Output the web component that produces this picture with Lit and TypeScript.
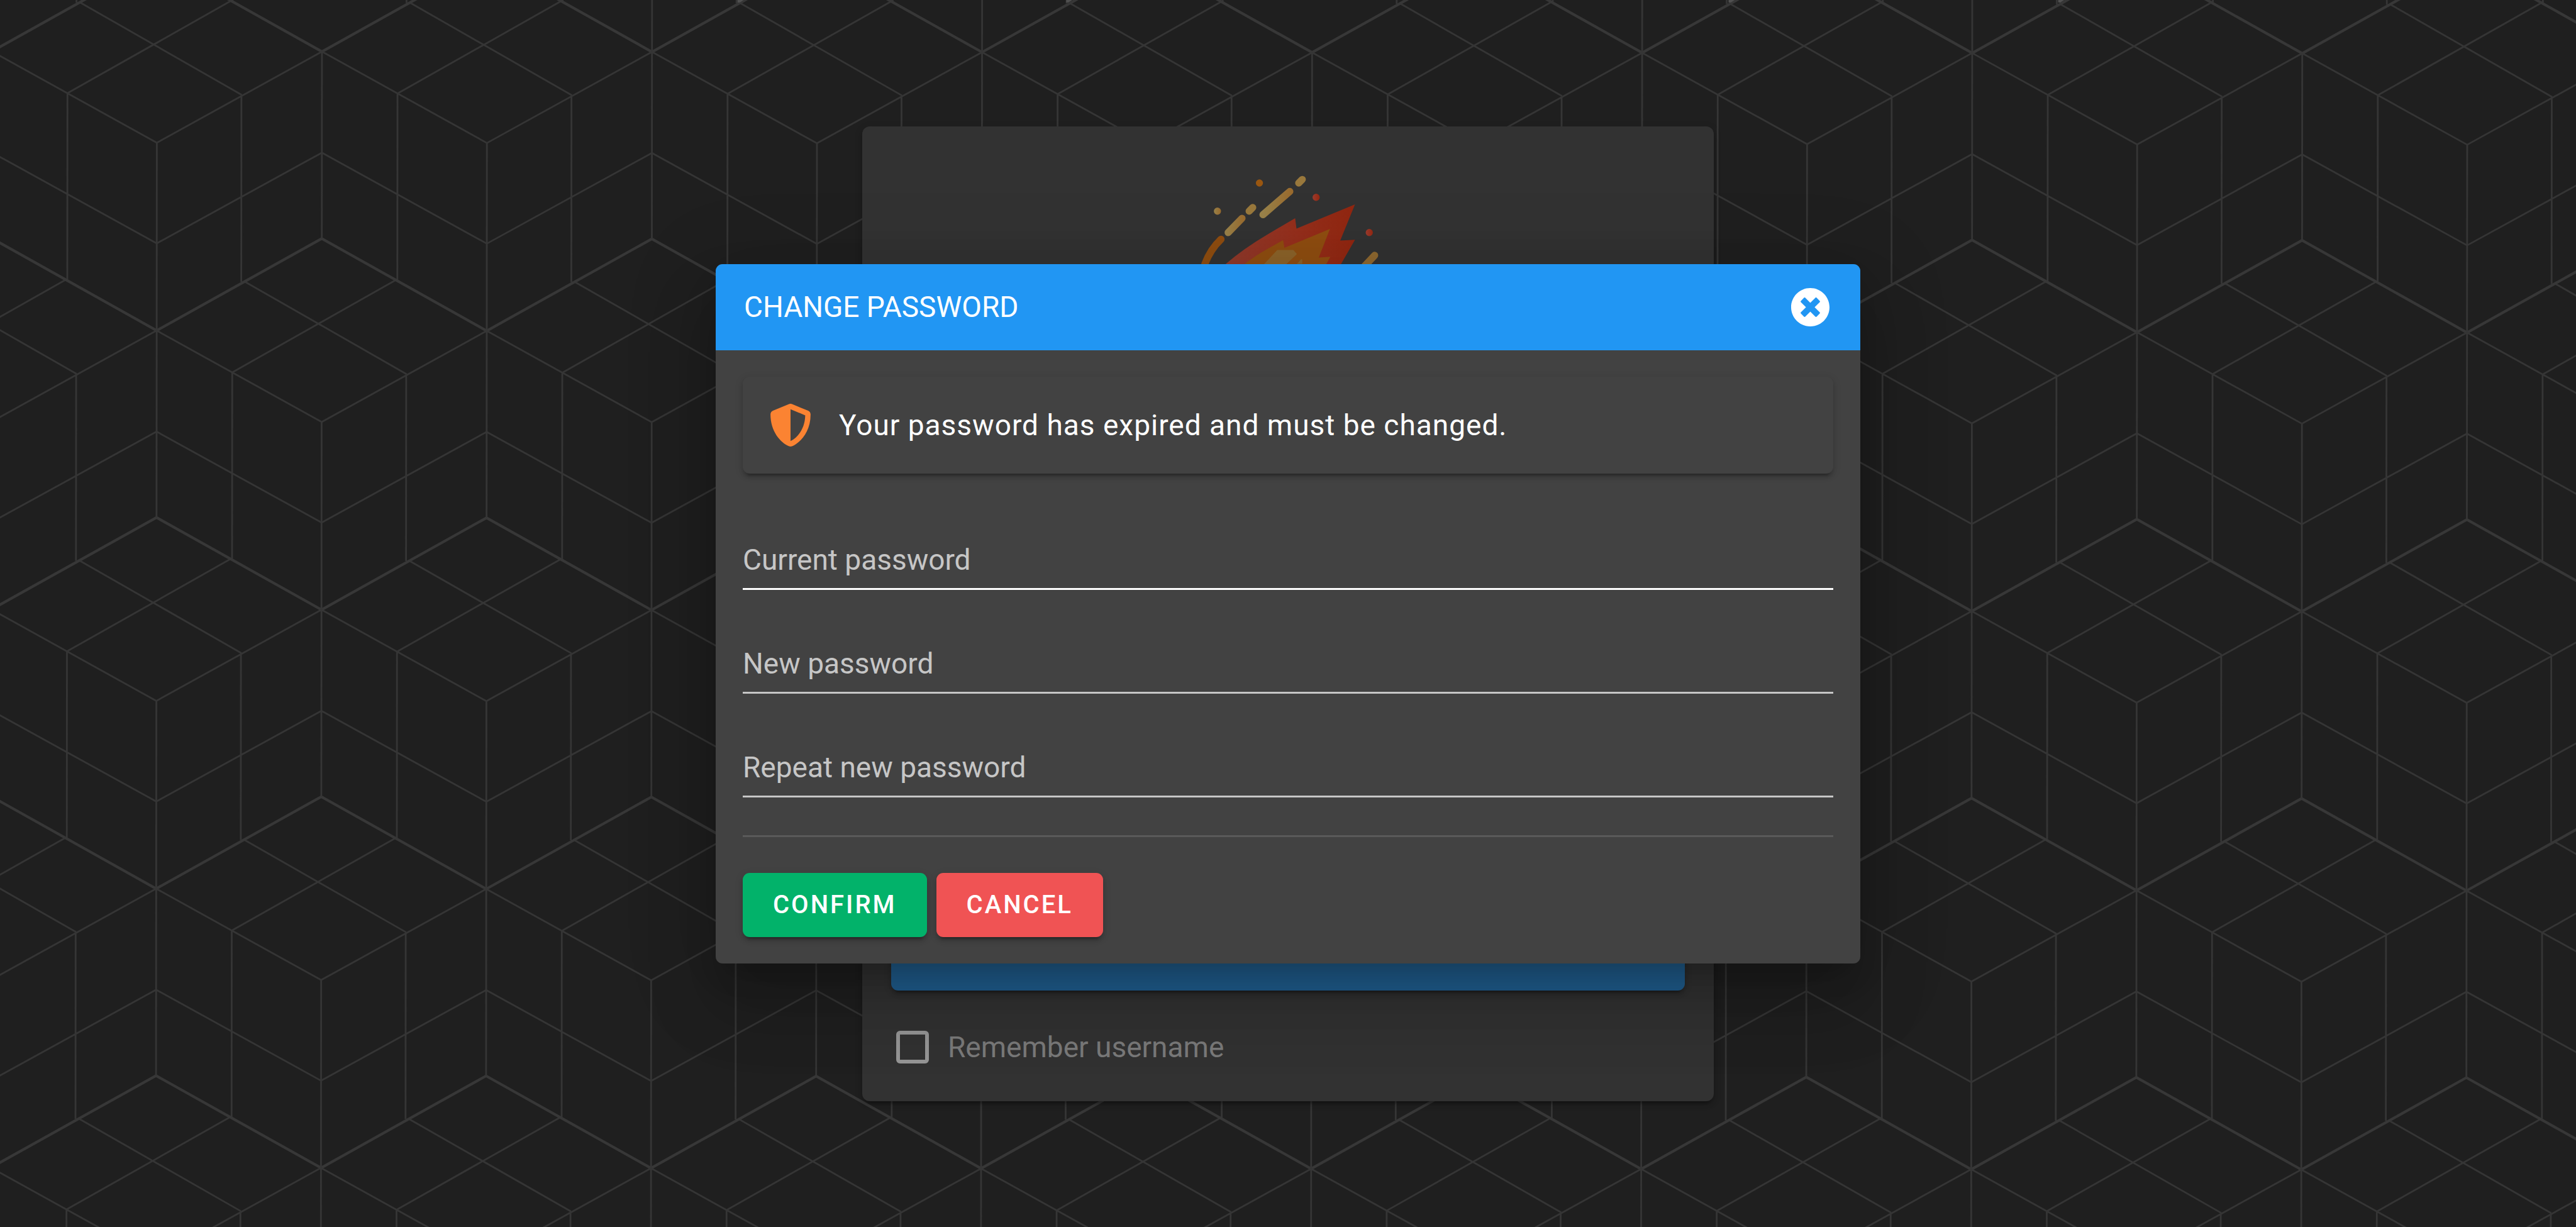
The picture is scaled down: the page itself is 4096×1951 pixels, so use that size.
import { LitElement, html, css, svg } from "lit";
import { customElement, property } from "lit/decorators.js";

/* Isometric cube wallpaper: every star-shaped joint repeats the same strokes. */
const THIN =
  "M0 0L-369 204M0 0L369 204M0 0V418M0 226L-369 429M0 226L369 429" +
  "M-180 99V515M169 95V511M-173 514L190 721M165 511L-199 717";
const BOLD = "M0 418L-369 624M0 418L369 624";
const JOINTS: { x: number; y: number; open: boolean }[] = [];
for (let row = -1; row < 5; row++) {
  for (let col = -1; col < 9; col++) {
    const odd = Math.abs(row % 2) === 1;
    JOINTS.push({
      x: 720 + col * 738 - (odd ? 369 : 0),
      y: 115 + row * 624,
      open: row === 0 && [0, 3, 6, 7].includes(col),
    });
  }
}
const SPARKS = [1655, 2390, 3871, 4608];

@customElement("cube-backdrop")
export class CubeBackdrop extends LitElement {
  static styles = css`
    :host {
      display: block;
    }
    .art {
      display: block;
      width: 100%;
      height: 100%;
    }
    .thin,
    .bold {
      fill: none;
      stroke: #353535;
      stroke-width: 4;
    }
    .bold {
      stroke: #373737;
      stroke-width: 6;
    }
    .spark {
      fill: #505050;
    }
  `;
  render() {
    return html`<svg class="art" viewBox="0 0 5760 2744" preserveAspectRatio="xMidYMid slice" aria-hidden="true">
      <g transform="rotate(0.05)">
        ${JOINTS.map(
          (j) => svg`<g transform="translate(${j.x} ${j.y})">
            <path class="thin" d=${THIN} />
            <path class="bold" d=${BOLD} />
            ${j.open ? null : svg`<path class="thin" d="M0 0V-420" />`}
          </g>`,
        )}
      </g>
      ${SPARKS.map((x) => svg`<path class="spark" d="M${x - 6} 0h14l-9 6h-5z" />`)}
    </svg>`;
  }
}

@customElement("comet-logo")
export class CometLogo extends LitElement {
  static styles = css`
    :host {
      display: block;
    }
    .art {
      display: block;
      width: 398px;
      height: 284px;
    }
    .streak {
      fill: none;
      stroke-width: 16;
      stroke-linecap: round;
    }
  `;
  render() {
    return html`<svg class="art" viewBox="0 0 560 400" aria-hidden="true">
      <defs>
        <linearGradient id="red" gradientUnits="userSpaceOnUse" x1="150" y1="0" x2="430" y2="0">
          <stop offset="0" stop-color="#90392b" />
          <stop offset="0.5" stop-color="#952f1c" />
          <stop offset="1" stop-color="#912610" />
        </linearGradient>
        <linearGradient id="amber" gradientUnits="userSpaceOnUse" x1="224" y1="0" x2="290" y2="0">
          <stop offset="0" stop-color="#99824a" />
          <stop offset="1" stop-color="#996a2d" />
        </linearGradient>
        <linearGradient id="amber2" gradientUnits="userSpaceOnUse" x1="140" y1="0" x2="185" y2="0">
          <stop offset="0" stop-color="#99824a" />
          <stop offset="1" stop-color="#996a2d" />
        </linearGradient>
        <linearGradient id="dot"><stop offset="0" stop-color="#99824a" /><stop offset="1" stop-color="#996a2d" /></linearGradient>
        <linearGradient id="ember"><stop offset="0" stop-color="#9b3c2e" /><stop offset="1" stop-color="#952711" /></linearGradient>
      </defs>
      <circle cx="122" cy="132" r="8" fill="url(#dot)" />
      <circle cx="216" cy="69" r="8" fill="#995610" />
      <circle cx="343" cy="101" r="8" fill="url(#ember)" />
      <circle cx="462" cy="180" r="8" fill="url(#ember)" />
      <path class="streak" stroke="url(#amber)" d="M224 140L284 88" />
      <path class="streak" stroke="#99783c" d="M304 69L312 61" />
      <path class="streak" stroke="#99783c" d="M193 132L201 124" />
      <path class="streak" stroke="url(#amber2)" d="M146 180L177 148" />
      <path class="streak" stroke="#8f4d10" d="M130 195Q106 218 94 250Q82 285 82 320" />
      <path class="streak" stroke="#8e6830" d="M474 231L430 278" />
      <path fill="url(#red)" d="M141 250Q180 216 236 183L296 148L299 171L430 117L397 198L430 196L399 250L360 320Q240 400 130 320Q110 280 141 250Z" />
      <path fill="#8f4d10" d="M183 250Q205 234 221 224L269 197L272 214L374 172L349 236L375 234L366 250L330 310H160Q150 275 183 250Z" />
      <path fill="#8c6329" d="M256 219H292L300 228L277 250L250 280H210L227 250ZM300 250L309 240Q312 238 312 242V250Z" />
    </svg>`;
  }
}

@customElement("password-field")
export class PasswordField extends LitElement {
  @property() label = "";
  @property({ type: Boolean }) active = false;

  static styles = css`
    :host {
      display: block;
    }
    .field {
      display: grid;
      height: 162px;
      border-bottom: 3px solid #c6c6c6;
    }
    .field.active {
      border-bottom-color: #ffffff;
    }
    .label,
    .input {
      grid-area: 1 / 1;
      align-self: end;
      font: 400 46px/54px Roboto, sans-serif;
      padding: 0 0 18px;
    }
    .label {
      color: #c6c6c6;
    }
    .input {
      width: 100%;
      box-sizing: border-box;
      border: 0;
      outline: 0;
      margin: 0;
      background: transparent;
      color: #ffffff;
    }
  `;
  render() {
    return html`<div class="field ${this.active ? "active" : ""}">
      <label class="label" for="entry">${this.label}</label>
      <input class="input" id="entry" type="password" />
    </div>`;
  }
}

@customElement("app-root")
export class AppRoot extends LitElement {
  static styles = css`
    :host {
      display: block;
      font: 400 46px/54px Roboto, sans-serif;
      color: #ffffff;
    }
    .page {
      display: grid;
      place-items: center;
      min-height: 100vh;
      overflow: hidden;
      background: #1f1f1f;
    }
    .backdrop,
    .login,
    .dialog {
      grid-area: 1 / 1;
    }
    .backdrop {
      width: 100%;
      height: 100vh;
    }
    .login {
      display: flex;
      flex-direction: column;
      justify-content: space-between;
      box-sizing: border-box;
      width: 100%;
      max-width: 1354px;
      min-height: 1550px;
      padding: 41px 46px 45px;
      border-radius: 12px;
      background: #323232;
      box-shadow: 0 9px 3px -6px rgba(0, 0, 0, 0.2), 0 6px 6px rgba(0, 0, 0, 0.14), 0 3px 14px rgba(0, 0, 0, 0.12);
    }
    .logo {
      align-self: center;
    }
    .submit {
      display: block;
      width: 100%;
      height: 125px;
      border: 0;
      border-radius: 11px;
      background: #216092;
      box-shadow: 0 9px 3px -6px rgba(0, 0, 0, 0.2), 0 6px 6px rgba(0, 0, 0, 0.14), 0 3px 14px rgba(0, 0, 0, 0.12);
    }
    .remember {
      display: flex;
      align-items: center;
      gap: 30px;
      padding: 63px 0 14px 8px;
      color: #7a7a7a;
    }
    .tick {
      appearance: none;
      box-sizing: border-box;
      width: 52px;
      height: 52px;
      margin: 0;
      border: 6px solid #969696;
      border-radius: 6px;
    }
    .dialog {
      width: 100%;
      max-width: 1820px;
      border-radius: 11px;
      background: #424242;
      overflow: hidden;
      box-shadow: 0 31px 43px -20px rgba(0, 0, 0, 0.2), 0 68px 108px 9px rgba(0, 0, 0, 0.14),
        0 26px 131px 23px rgba(0, 0, 0, 0.12);
    }
    .bar {
      display: flex;
      align-items: center;
      justify-content: space-between;
      height: 137px;
      padding: 0 48px 0 45px;
      background: #2196f3;
    }
    .title {
      margin: 0;
      font: inherit;
    }
    .close {
      display: block;
      padding: 0;
      border: 0;
      background: none;
    }
    .cross {
      display: block;
      width: 63px;
      height: 63px;
      fill: #ffffff;
    }
    .body {
      padding: 42px 43px;
    }
    .notice {
      display: flex;
      align-items: center;
      gap: 43px;
      height: 154px;
      margin-bottom: 20px;
      padding: 0 42px;
      box-sizing: border-box;
      border-radius: 11px;
      box-shadow: 0 9px 3px -6px rgba(0, 0, 0, 0.2), 0 6px 6px rgba(0, 0, 0, 0.14), 0 3px 14px rgba(0, 0, 0, 0.12);
      background: #424242;
      letter-spacing: 1px;
    }
    .shield {
      width: 68px;
      height: 68px;
      fill: #fb8332;
    }
    .rule {
      height: 3px;
      margin: 60px 0 57px;
      border: 0;
      background: #5a5a5a;
    }
    .actions {
      display: flex;
      gap: 15px;
    }
    .action {
      height: 102px;
      padding: 0 48px;
      border: 0;
      border-radius: 11px;
      color: #ffffff;
      font: 500 40px/48px Roboto, sans-serif;
      letter-spacing: 3px;
      box-shadow: 0 9px 3px -6px rgba(0, 0, 0, 0.2), 0 6px 6px rgba(0, 0, 0, 0.14), 0 3px 14px rgba(0, 0, 0, 0.12);
    }
    .confirm {
      background: #02b26a;
    }
    .cancel {
      background: #f05354;
    }
  `;

  render() {
    return html`<div class="page">
      <cube-backdrop class="backdrop"></cube-backdrop>
      <main class="login">
        <comet-logo class="logo"></comet-logo>
        <form>
          <button class="submit" type="button" aria-label="Log in"></button>
          <div class="remember">
            <input class="tick" id="remember" type="checkbox" />
            <label for="remember">Remember username</label>
          </div>
        </form>
      </main>
      <section class="dialog" role="dialog" aria-labelledby="title">
        <header class="bar">
          <h1 class="title" id="title">CHANGE PASSWORD</h1>
          <button class="close" type="button" aria-label="Close">
            <svg class="cross" viewBox="0 0 512 512">
              <path d="M256 8C119 8 8 119 8 256s111 248 248 248 248-111 248-248S393 8 256 8zm121.600 313.100c4.700 4.700 4.700 12.300 0 17L338 377.600c-4.700 4.700-12.300 4.700-17 0L256 312l-65.100 65.600c-4.700 4.700-12.300 4.700-17 0L134.400 338c-4.700-4.700-4.700-12.300 0-17l65.600-65-65.600-65.100c-4.700-4.700-4.700-12.300 0-17l39.600-39.600c4.700-4.700 12.300-4.700 17 0l65 65.700 65.100-65.600c4.700-4.700 12.300-4.700 17 0l39.600 39.600c4.700 4.700 4.700 12.300 0 17L312 256l65.600 65.100z" />
            </svg>
          </button>
        </header>
        <div class="body">
          <div class="notice" role="alert">
            <svg class="shield" viewBox="0 0 512 512" aria-hidden="true">
              <path d="M466.500 83.700l-192-80a48.150 48.150 0 0 0-36.900 0l-192 80C27.700 91.100 16 108.600 16 128c0 198.500 114.500 335.700 221.500 380.300 11.800 4.900 25.100 4.900 36.900 0C360.100 472.600 496 349.300 496 128c0-19.400-11.700-36.900-29.500-44.300zM256.100 446.300l-.1-381 175.900 73.300c-3.300 151.400-82.100 261.100-175.800 307.700z" />
            </svg>
            <span>Your password has expired and must be changed.</span>
          </div>
          <password-field label="Current password" active></password-field>
          <password-field label="New password"></password-field>
          <password-field label="Repeat new password"></password-field>
          <hr class="rule" />
          <div class="actions">
            <button class="action confirm" type="button">CONFIRM</button>
            <button class="action cancel" type="button">CANCEL</button>
          </div>
        </div>
      </section>
    </div>`;
  }
}
